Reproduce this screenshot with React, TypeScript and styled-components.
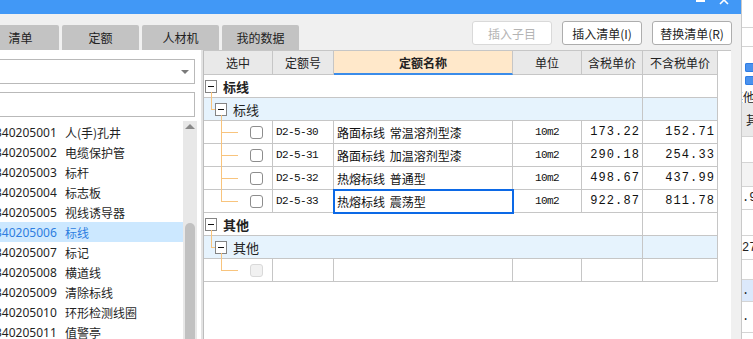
import styled, { createGlobalStyle } from 'styled-components';

const TREE = '#f8c47d';
const LINE = '#c6c6c6';
const CJK = `"Noto Sans CJK SC", "Noto Sans", sans-serif`;
const UI = `"Noto Sans", "Noto Sans CJK SC", sans-serif`;
const MONO = `"Liberation Mono", "Noto Sans CJK SC", monospace`;

const GlobalStyle = createGlobalStyle`
  * { box-sizing: border-box; }
  html, body {
    margin: 0;
    padding: 0;
    background: #ffffff;
  }
  body {
    width: 753px;
    height: 339px;
    overflow: hidden;
    font-family: ${UI};
    font-size: 12px;
    color: #1f1f1f;
  }
`;

const Screen = styled.div`
  display: flex;
  width: 753px;
  height: 339px;
  overflow: hidden;
`;

/* ---------- dialog ---------- */

const Dialog = styled.div`
  width: 741px;
  flex: none;
  display: flex;
  flex-direction: column;
  background: #f0f0f0;
`;

const TitleBar = styled.div`
  height: 14px;
  flex: none;
  background: #4198f6;
  display: flex;
  justify-content: flex-end;
  padding-right: 8px;
`;

const TopRow = styled.div`
  height: 36px;
  flex: none;
  display: flex;
  justify-content: space-between;
  padding-right: 9px;
`;

const Tabs = styled.div`
  display: flex;
  align-items: flex-end;
  gap: 3px;
  margin-left: -18px;
`;

const Tab = styled.div`
  width: 77px;
  height: 25px;
  background: #c3c3c3;
  border-radius: 2px 2px 0 0;
  display: flex;
  align-items: center;
  justify-content: center;
  font-family: ${CJK};
  font-size: 12px;
  color: #222;
`;

const Buttons = styled.div`
  display: flex;
  gap: 10px;
  padding-top: 7px;
`;

const Button = styled.button<{ $disabled?: boolean }>`
  width: 80px;
  height: 24px;
  padding: 0;
  background: #ffffff;
  border: 1px solid ${(p) => (p.$disabled ? '#d9d9d9' : '#adadad')};
  border-radius: 3px;
  font-family: ${CJK};
  font-size: 12px;
  color: ${(p) => (p.$disabled ? '#b4b4b4' : '#1f1f1f')};
`;

const Main = styled.div`
  flex: 1;
  min-height: 0;
  display: flex;
`;

/* ---------- left list ---------- */

const LeftPanel = styled.div`
  width: 201px;
  flex: none;
  background: #ffffff;
  display: flex;
  flex-direction: column;
  padding-top: 9px;
  overflow: hidden;
`;

const Field = styled.div<{ $gap?: number }>`
  height: 25px;
  flex: none;
  margin: ${(p) => p.$gap ?? 0}px 6px 0 -5px;
  border: 1px solid #b9b9b9;
  background: #ffffff;
  display: flex;
  align-items: center;
  justify-content: flex-end;
  padding-right: 5px;
`;

const Caret = styled.span`
  width: 0;
  height: 0;
  border-left: 4px solid transparent;
  border-right: 4px solid transparent;
  border-top: 4px solid #7a7a7a;
`;

const ListArea = styled.div`
  flex: 1;
  min-height: 0;
  display: flex;
  margin-top: 4px;
`;

const Items = styled.div`
  width: 183px;
  flex: none;
  padding-top: 1px;
`;

const Item = styled.div<{ $selected?: boolean }>`
  height: 20px;
  display: flex;
  align-items: center;
  background: ${(p) => (p.$selected ? '#cce8ff' : 'transparent')};
  color: ${(p) => (p.$selected ? '#2d7de0' : '#1f1f1f')};
  font-size: 12px;
  white-space: nowrap;
`;

const ItemCode = styled.span`
  width: 70px;
  margin-left: -5px;
  flex: none;
  font-family: ${UI};
`;

const ItemName = styled.span`
  font-family: ${CJK};
`;

const ScrollTrack = styled.div`
  width: 14px;
  flex: none;
  background: #e8e8e8;
  display: flex;
  flex-direction: column;
  align-items: center;
  padding-top: 3px;
`;

const ScrollUp = styled.span`
  width: 0;
  height: 0;
  border-left: 5px solid transparent;
  border-right: 5px solid transparent;
  border-bottom: 5px solid #8a8a8a;
`;

const ScrollThumb = styled.div`
  width: 10px;
  flex: 1;
  margin-top: 94px;
  background: #c1c1c1;
  border-radius: 5px 5px 0 0;
`;

const Splitter = styled.div`
  width: 2px;
  flex: none;
  background: #e3e3e3;
`;

/* ---------- quota grid ---------- */

const GridPanel = styled.div`
  width: 528px;
  flex: none;
  margin-right: 10px;
  background: #ffffff;
  border-left: 1px solid #bdbdbd;
  border-top: 1px solid ${LINE};
`;

const Grid = styled.div`
  width: 514px;
  display: grid;
  grid-template-columns: 69px 61px 179px 69px 61px 75px;
  grid-template-rows: 24px;
  grid-auto-rows: 23px;
`;

const HeadCell = styled.div<{ $accent?: boolean }>`
  display: flex;
  align-items: center;
  justify-content: center;
  background: ${(p) => (p.$accent ? '#ffe8ca' : '#e9e9e9')};
  border-right: 1px solid ${LINE};
  border-bottom: ${(p) => (p.$accent ? '2px solid #3b8ce9' : `1px solid ${LINE}`)};
  font-family: ${CJK};
  font-size: 12px;
  font-weight: ${(p) => (p.$accent ? 700 : 400)};
  color: #222;
`;

const GroupCell = styled.div<{ $sub?: boolean }>`
  grid-column: span 5;
  position: relative;
  display: flex;
  align-items: center;
  padding-left: ${(p) => (p.$sub ? 11 : 1)}px;
  background: ${(p) => (p.$sub ? '#e6f3fd' : '#ffffff')};
  border-right: 1px solid ${LINE};
  border-bottom: 1px solid ${LINE};
`;

const TailCell = styled.div<{ $sub?: boolean }>`
  background: ${(p) => (p.$sub ? '#e6f3fd' : '#ffffff')};
  border-right: 1px solid ${LINE};
  border-bottom: 1px solid ${LINE};
`;

const Expander = styled.span`
  width: 12px;
  height: 13px;
  flex: none;
  border: 1px solid #848484;
  background: #ffffff;
  display: flex;
  align-items: center;
  justify-content: center;

  &::after {
    content: '';
    width: 6px;
    height: 1px;
    background: #111;
  }
`;

const GroupLabel = styled.span<{ $bold?: boolean }>`
  margin-left: 6px;
  font-family: ${CJK};
  font-size: 13px;
  font-weight: ${(p) => (p.$bold ? 700 : 400)};
  color: #222;
`;

const VLine = styled.span<{ $x: number; $top: number; $bottom: number }>`
  position: absolute;
  left: ${(p) => p.$x}px;
  top: ${(p) => p.$top}px;
  bottom: ${(p) => p.$bottom}px;
  width: 1px;
  background: ${TREE};
`;

const HLine = styled.span<{ $x: number; $w: number }>`
  position: absolute;
  left: ${(p) => p.$x}px;
  top: 11px;
  width: ${(p) => p.$w}px;
  height: 1px;
  background: ${TREE};
`;

const Cell = styled.div<{ $align?: 'left' | 'center' | 'right' }>`
  position: relative;
  display: flex;
  align-items: center;
  justify-content: ${(p) =>
    p.$align === 'right' ? 'flex-end' : p.$align === 'center' ? 'center' : 'flex-start'};
  padding: 0 3px;
  border-right: 1px solid ${LINE};
  border-bottom: 1px solid ${LINE};
  white-space: nowrap;
  overflow: visible;
`;

const PickCell = styled(Cell)`
  padding-left: 46px;
`;

const NameCell = styled(Cell)<{ $focused?: boolean }>`
  font-family: ${CJK};
  font-size: 12px;
  word-spacing: 2px;
  color: #111;
  ${(p) => p.$focused && `outline: 2px solid #0c69e6; outline-offset: -1px; z-index: 1;`}
`;

const CodeText = styled.span`
  font-family: ${MONO};
  font-size: 11px;
  letter-spacing: -0.6px;
  color: #111;
`;

const PriceText = styled.span`
  font-family: ${MONO};
  font-size: 12px;
  letter-spacing: 1.1px;
  margin-right: -1px;
  color: #111;
`;

const Check = styled.span<{ $disabled?: boolean }>`
  width: 13px;
  height: 13px;
  flex: none;
  border: 1px solid ${(p) => (p.$disabled ? '#d9d9d9' : '#8d8d8d')};
  border-radius: 3px;
  background: ${(p) => (p.$disabled ? '#f1f1f1' : '#ffffff')};
`;

/* ---------- window behind ---------- */

const BackWindow = styled.div`
  flex: 1;
  display: flex;
  flex-direction: column;
  border-left: 1px solid #c9c9c9;
  background: #ffffff;
  overflow: hidden;
  white-space: nowrap;
`;

const BackBlock = styled.div<{ $h: number; $bg?: string; $line?: boolean }>`
  height: ${(p) => p.$h}px;
  flex: none;
  background: ${(p) => p.$bg ?? '#ffffff'};
  border-bottom: ${(p) => (p.$line ? '1px solid #d4d4d4' : 'none')};
  display: flex;
  align-items: center;
  font-family: ${MONO};
  font-size: 12px;
  color: #222;
`;

const BackIcons = styled.div`
  height: 42px;
  flex: none;
  display: flex;
  flex-direction: column;
  gap: 4px;
  padding: 16px 0 0 3px;
`;

const BackIcon = styled.span`
  width: 12px;
  height: 9px;
  border-radius: 2px;
  background: #4a92ee;
  box-shadow: inset 0 0 0 1px #2f7de4;
`;

const BackLabel = styled.span<{ $shift: number }>`
  margin-left: ${(p) => p.$shift}px;
  font-family: ${CJK};
  font-size: 12px;
`;

/* ---------- data ---------- */

const tabs = ['清单', '定额', '人材机', '我的数据'];

const items = [
  ['340205001', '人(手)孔井'],
  ['340205002', '电缆保护管'],
  ['340205003', '标杆'],
  ['340205004', '标志板'],
  ['340205005', '视线诱导器'],
  ['340205006', '标线'],
  ['340205007', '标记'],
  ['340205008', '横道线'],
  ['340205009', '清除标线'],
  ['340205010', '环形检测线圈'],
  ['340205011', '值警亭'],
];

const quotas = [
  { code: 'D2-5-30', name: '路面标线 常温溶剂型漆', unit: '10m2', tax: '173.22', net: '152.71' },
  { code: 'D2-5-31', name: '路面标线 加温溶剂型漆', unit: '10m2', tax: '290.18', net: '254.33' },
  { code: 'D2-5-32', name: '热熔标线 普通型', unit: '10m2', tax: '498.67', net: '437.99' },
  { code: 'D2-5-33', name: '热熔标线 震荡型', unit: '10m2', tax: '922.87', net: '811.78' },
];

const WindowControls = () => (
  <svg width="40" height="14" viewBox="0 0 40 14">
    <rect x="3" y="0" width="9" height="2" fill="#ffffff" />
    <path d="M27 -4 L35 4 M35 -4 L27 4" stroke="#ffffff" strokeWidth="1.6" />
  </svg>
);

const Group = ({ label }: { label: string }) => (
  <>
    <GroupCell>
      <Expander />
      <GroupLabel $bold>{label}</GroupLabel>
      <VLine $x={7} $top={17} $bottom={-1} />
    </GroupCell>
    <TailCell />
    <GroupCell $sub>
      <VLine $x={7} $top={0} $bottom={11} />
      <HLine $x={7} $w={4} />
      <Expander />
      <GroupLabel>{label}</GroupLabel>
      <VLine $x={17} $top={17} $bottom={-1} />
    </GroupCell>
    <TailCell $sub />
  </>
);

const App = () => {
  return (
    <>
      <GlobalStyle />
      <Screen>
        <Dialog>
          <TitleBar>
            <WindowControls />
          </TitleBar>
          <TopRow>
            <Tabs>
              {tabs.map((t) => (
                <Tab key={t}>{t}</Tab>
              ))}
            </Tabs>
            <Buttons>
              <Button $disabled>插入子目</Button>
              <Button>插入清单(I)</Button>
              <Button>替换清单(R)</Button>
            </Buttons>
          </TopRow>
          <Main>
            <LeftPanel>
              <Field>
                <Caret />
              </Field>
              <Field $gap={8} />
              <ListArea>
                <Items>
                  {items.map(([code, name]) => (
                    <Item key={code} $selected={code === '340205006'}>
                      <ItemCode>{code}</ItemCode>
                      <ItemName>{name}</ItemName>
                    </Item>
                  ))}
                </Items>
                <ScrollTrack>
                  <ScrollUp />
                  <ScrollThumb />
                </ScrollTrack>
              </ListArea>
            </LeftPanel>
            <Splitter />
            <GridPanel>
              <Grid>
                <HeadCell>选中</HeadCell>
                <HeadCell>定额号</HeadCell>
                <HeadCell $accent>定额名称</HeadCell>
                <HeadCell>单位</HeadCell>
                <HeadCell>含税单价</HeadCell>
                <HeadCell>不含税单价</HeadCell>

                <Group label="标线" />
                {quotas.map((q, i) => {
                  const last = i === quotas.length - 1;
                  return (
                    <div key={q.code} style={{ display: 'contents' }}>
                      <PickCell>
                        <VLine $x={17} $top={0} $bottom={last ? 11 : -1} />
                        <HLine $x={17} $w={17} />
                        <Check />
                      </PickCell>
                      <Cell>
                        <CodeText>{q.code}</CodeText>
                      </Cell>
                      <NameCell $focused={last}>{q.name}</NameCell>
                      <Cell $align="center">
                        <CodeText>{q.unit}</CodeText>
                      </Cell>
                      <Cell $align="right">
                        <PriceText>{q.tax}</PriceText>
                      </Cell>
                      <Cell $align="right">
                        <PriceText>{q.net}</PriceText>
                      </Cell>
                    </div>
                  );
                })}

                <Group label="其他" />
                <PickCell>
                  <VLine $x={17} $top={0} $bottom={11} />
                  <HLine $x={17} $w={17} />
                  <Check $disabled />
                </PickCell>
                <Cell />
                <NameCell />
                <Cell />
                <Cell />
                <Cell />
              </Grid>
            </GridPanel>
          </Main>
        </Dialog>

        <BackWindow>
          <BackBlock $h={28} $line />
          <BackBlock $h={19} $line />
          <BackIcons>
            <BackIcon />
            <BackIcon />
          </BackIcons>
          <BackBlock $h={14}>
            <BackLabel $shift={-11}>其他</BackLabel>
          </BackBlock>
          <BackBlock $h={34} $bg="#e9e9e9" $line>
            <BackLabel $shift={4}>其</BackLabel>
          </BackBlock>
          <BackBlock $h={26} $line />
          <BackBlock $h={24} $bg="#f3f3f3" $line />
          <BackBlock $h={23} $line>.9</BackBlock>
          <BackBlock $h={26} $line />
          <BackBlock $h={24} $line>27</BackBlock>
          <BackBlock $h={20} $line />
          <BackBlock $h={22} $bg="#dce9fb" $line>. 1</BackBlock>
          <BackBlock $h={31} $line>. 1</BackBlock>
        </BackWindow>
      </Screen>
    </>
  );
};

export default App;
